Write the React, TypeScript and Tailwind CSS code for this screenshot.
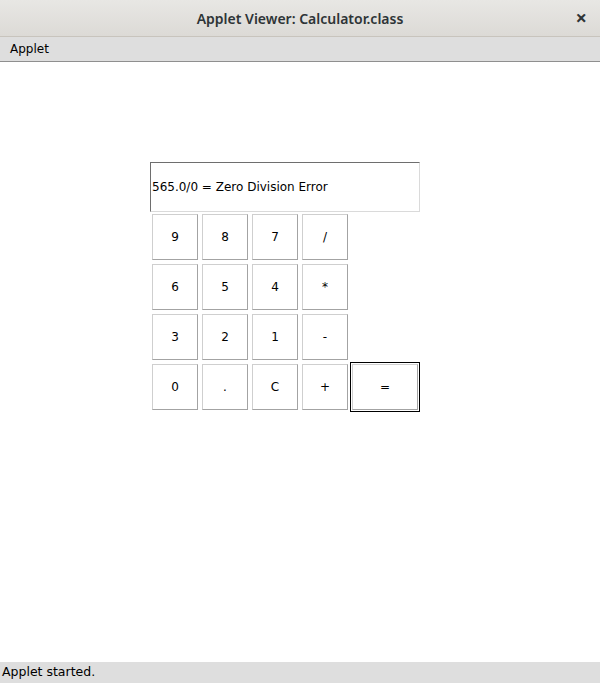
const keys: string[][] = [
  ["9", "8", "7", "/"],
  ["6", "5", "4", "*"],
  ["3", "2", "1", "-"],
  ["0", ".", "C", "+"],
];

function Key({ label }: { label: string }) {
  return (
    <div className="flex h-[50px] w-[50px] p-[2px]">
      <div className="flex flex-1 items-center justify-center border border-t-[#cfcfcf] border-l-[#cfcfcf] border-r-[#a3a3a3] border-b-[#a3a3a3] bg-white text-[12px] text-black">
        {label}
      </div>
    </div>
  );
}

export default function App() {
  return (
    <div className="flex h-[683px] w-[600px] flex-col bg-white font-['DejaVu_Sans',sans-serif]">
      <div className="relative flex h-[37px] shrink-0 items-center justify-center border-b border-[#c8c4bd] bg-gradient-to-b from-[#e8e7e4] to-[#dcdad6]">
        <span className="font-['Noto_Sans',sans-serif] text-[14px] font-semibold text-[#2e3436]">
          Applet Viewer: Calculator.class
        </span>
        <span className="absolute right-[13px] top-[5px] font-['Noto_Sans',sans-serif] text-[20px] font-bold leading-[26px] text-[#2e3436]">
          ×
        </span>
      </div>
      <div className="flex h-[25px] shrink-0 items-center border-b border-[#8f8f8f] bg-[#dedede] pl-[10px] text-[12px] text-black">
        Applet
      </div>
      <div className="flex flex-1 flex-col pl-[150px] pt-[100px]">
        <div className="flex h-[50px] w-[270px] items-center border border-t-[#6e6e6e] border-l-[#6e6e6e] border-r-[#dadada] border-b-[#dadada] pl-[1px] text-[12px] text-black">
          565.0/0 = Zero Division Error
        </div>
        <div className="flex">
          <div className="flex flex-col">
            {keys.map((row, i) => (
              <div key={i} className="flex">
                {row.map((k) => (
                  <Key key={k} label={k} />
                ))}
              </div>
            ))}
          </div>
          <div className="flex flex-col justify-end">
            <div className="flex h-[50px] w-[70px] border border-black p-[1px]">
              <div className="flex flex-1 items-center justify-center border border-t-[#cfcfcf] border-l-[#cfcfcf] border-r-[#a3a3a3] border-b-[#a3a3a3] bg-white text-[12px] text-black">
                =
              </div>
            </div>
          </div>
        </div>
      </div>
      <div className="flex h-[21px] shrink-0 items-center bg-[#dedede] pl-[2px] text-[12.5px] text-black">
        Applet started.
      </div>
    </div>
  );
}
